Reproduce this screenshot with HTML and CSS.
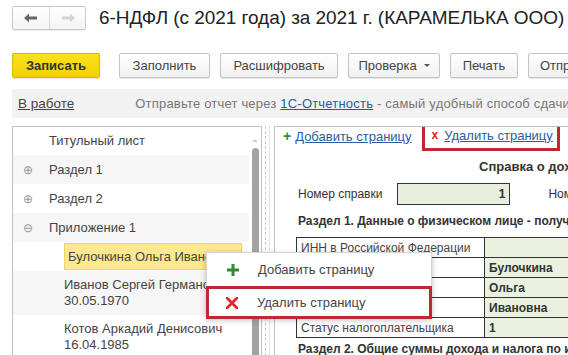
FILE: index.html
```html
<!DOCTYPE html>
<html lang="ru">
<head>
<meta charset="utf-8">
<link rel="stylesheet" href="styles.css">
</head>
<body>
<div class="page">
  <header class="header">
    <div class="nav">
      <span class="nav-btn"><svg width="14" height="10" viewBox="0 0 14 10"><path d="M0 5 L5 0.5 L5 3.5 L13 3.5 L13 6.5 L5 6.5 L5 9.5 Z" fill="#666"/></svg></span>
      <span class="nav-btn"><svg width="14" height="10" viewBox="0 0 14 10"><path d="M14 5 L9 0.5 L9 3.5 L1 3.5 L1 6.5 L9 6.5 L9 9.5 Z" fill="#d4d4d4"/></svg></span>
    </div>
    <h1 class="title">6-НДФЛ (с 2021 года) за 2021 г. (КАРАМЕЛЬКА ООО)</h1>
  </header>

  <div class="toolbar">
    <span class="btn btn-primary">Записать</span>
    <span class="btn btn-fill">Заполнить</span>
    <span class="btn w118">Расшифровать</span>
    <span class="btn w92">Проверка <span class="caret"></span></span>
    <span class="btn w68">Печать</span>
    <span class="btn">Отправить</span>
  </div>

  <div class="status">
    <a class="status-link">В работе</a>
    <span class="status-text">Отправьте отчет через <a class="blue-link">1С-Отчетность</a> - самый удобный способ сдачи отчетности</span>
  </div>

  <div class="main">
    <div class="tree-panel">
      <div class="tree">
        <div class="row"><span class="tog"></span>Титульный лист</div>
        <div class="row alt"><span class="tog">⊕</span>Раздел 1</div>
        <div class="row"><span class="tog">⊕</span>Раздел 2</div>
        <div class="row alt"><span class="tog">⊖</span>Приложение 1</div>
        <div class="row child"><span class="sel">Булочкина Ольга Ивановна</span></div>
        <div class="row child alt two">Иванов Сергей Германович<br>30.05.1970</div>
        <div class="row child two">Котов Аркадий Денисович<br>16.04.1985</div>
      </div>
      <div class="scroll">
        <span class="scroll-up"></span>
        <span class="thumb"></span>
      </div>
    </div>
    <div class="splitter"><span class="dash"></span><span class="line"></span></div>
    <div class="form-panel">
      <div class="links">
        <span class="plus-g">+</span><a class="blue-link">Добавить страницу</a>
        <span class="del-box"><span class="x-r">x</span><a class="blue-link">Удалить страницу</a></span>
      </div>
      <div class="form-title">Справка о доходах и суммах налога физического лица</div>
      <div class="num-row">
        <span class="lbl">Номер справки</span>
        <span class="num-input">1</span>
        <span class="lbl">Номер корректировки</span>
      </div>
      <div class="section">Раздел 1. Данные о физическом лице - получателе дохода</div>
      <table class="grid">
        <tr><td class="k">ИНН в Российской Федерации</td><td class="v"></td></tr>
        <tr><td class="k">Фамилия</td><td class="v">Булочкина</td></tr>
        <tr><td class="k">Имя</td><td class="v">Ольга</td></tr>
        <tr><td class="k">Отчество</td><td class="v">Ивановна</td></tr>
        <tr><td class="k">Статус налогоплательщика</td><td class="v">1</td></tr>
      </table>
      <div class="section s2">Раздел 2. Общие суммы дохода и налога по итогам налогового периода</div>
    </div>
  </div>

  <div class="menu">
    <div class="mi"><svg class="mi-icon" width="12" height="12" viewBox="0 0 12 12"><path d="M4.5 0h3v4.5H12v3H7.5V12h-3V7.5H0v-3h4.5z" fill="#2e8b3e"/></svg>Добавить страницу</div>
    <div class="mi mi-del"><svg class="mi-icon" width="12" height="12" viewBox="0 0 12 12"><path d="M1 1 L11 11 M11 1 L1 11" stroke="#e0212a" stroke-width="2.6" stroke-linecap="round"/></svg>Удалить страницу</div>
  </div>
</div>
</body>
</html>
```

FILE: styles.css
```css
* { box-sizing: border-box; }
html, body { margin: 0; padding: 0; }
body {
  width: 568px; height: 355px; overflow: hidden; background: #fff;
  font-family: "Liberation Sans", Arial, sans-serif; font-size: 13px; color: #333;
}
.page { position: relative; width: 568px; height: 355px; overflow: hidden; }

.header { display: flex; align-items: center; padding: 6px 0 0 12px; height: 30px; }
.nav { display: flex; height: 24px; border: 1px solid #c9c9c9; border-radius: 2px; box-shadow: 0 1px 1px rgba(0,0,0,0.08); }
.nav-btn { width: 36px; display: flex; align-items: center; justify-content: center; background: linear-gradient(#fff, #f4f4f4); }
.nav-btn + .nav-btn { border-left: 1px solid #dadada; }
.title { margin: 0 0 0 13px; font-size: 19px; font-weight: normal; color: #222; white-space: nowrap; letter-spacing: -0.05px; }

.toolbar { display: flex; gap: 10px; margin-top: 23px; padding-left: 12px; height: 25px; white-space: nowrap; }
.btn {
  flex-shrink: 0; display: flex; align-items: center; justify-content: center; padding: 0 11px; height: 25px;
  border: 1px solid #c4c4c4; border-radius: 2px; background: linear-gradient(#fff, #f1f1f1);
  box-shadow: 0 1px 1px rgba(0,0,0,0.1); color: #444; font-size: 13px;
}
.btn-primary { width: 88px; background: linear-gradient(#fbe21d, #f2d100); border-color: #d9b900; font-weight: bold; color: #333; }
.btn-fill { margin-left: 9px; width: 91px; }
.w118 { width: 118px; }
.w92 { width: 92px; }
.w68 { width: 68px; }
.caret { display: inline-block; margin-left: 7px; width: 0; height: 0; border-left: 3px solid transparent; border-right: 3px solid transparent; border-top: 3px solid #555; }

.status { display: flex; align-items: center; margin: 11px 0 0 12px; height: 29px; background: #f2f2f2; white-space: nowrap; }
.status-link { flex-shrink: 0; padding-left: 6px; text-decoration: underline; color: #444; font-size: 13.5px; }
.status-text { flex-shrink: 0; margin-left: 61px; color: #777; font-size: 13px; letter-spacing: 0.2px; }
.blue-link { color: #2b5b9e; text-decoration: underline; }

.main { display: flex; margin: 8px 0 0 12px; height: 240px; }
.tree-panel { flex-shrink: 0; display: flex; width: 250px; border: 1px solid #c2c2c2; border-bottom: none; }
.tree { flex: 1; margin-top: -1px; }
.row { display: flex; align-items: center; height: 29px; color: #444; white-space: nowrap; overflow: hidden; }
.row.alt { background: #f6f6f6; }
.tog { width: 36px; padding-left: 10px; color: #999; font-size: 12px; }
.child { padding-left: 51px; }
.two { display: block; height: 44px; padding-top: 6px; line-height: 16px; }
.sel { display: block; width: 178px; height: 27px; line-height: 25px; padding-left: 3px; background: #fbe88f; border: 1px solid #efd36a; overflow: hidden; white-space: nowrap; }
.scroll { position: relative; width: 12px; }
.scroll-up { display: block; margin: 12px auto 0; width: 0; height: 0; border-left: 3px solid transparent; border-right: 3px solid transparent; border-bottom: 3px solid #ccc; }
.thumb { display: block; margin: 6px auto 0; width: 7px; height: 220px; border-radius: 4px 4px 0 0; background: #a3a3a3; }

.splitter { flex-shrink: 0; display: flex; width: 12px; justify-content: flex-start; }
.dash { margin-left: 3px; width: 0; border-left: 1px dashed #c8c8c8; }
.line { margin-left: 3px; width: 0; border-left: 1px solid #e3e3e3; }

.form-panel { flex: 1; min-width: 0; border-left: 1px solid #c2c2c2; border-top: 1px solid #c2c2c2; padding-left: 8px; white-space: nowrap; overflow: hidden; font-size: 12px; }
.links { position: relative; display: flex; align-items: center; height: 22px; margin-top: -2px; font-size: 13px; }
.plus-g { color: #2e8b3e; font-weight: bold; font-size: 14px; margin-right: 4px; }
.del-box { flex-shrink: 0; display: flex; align-items: center; margin-left: 10px; height: 31px; margin-top: -2px; padding: 0 4px 0 7px; border: 3px solid #c0282f; }
.x-r { color: #e0212a; font-weight: bold; font-size: 12px; margin-right: 6px; }
.form-title { margin: 12px 0 0 196px; font-weight: bold; color: #333; font-size: 13px; }
.num-row { display: flex; align-items: center; margin-top: 9px; padding-left: 15px; height: 22px; }
.lbl { flex-shrink: 0; }
.num-input { flex-shrink: 0; margin-left: 15px; width: 113px; height: 22px; border: 1px solid #333; background: #e8eedc; text-align: right; padding-right: 4px; line-height: 20px; font-weight: bold; margin-right: 38px; }
.section { margin-top: 9px; padding-left: 15px; font-weight: bold; color: #333; }
.grid { margin: 9px 0 0 13px; border-collapse: collapse; table-layout: fixed; width: 400px; }
.grid td { height: 20px; border: 1px solid #333; padding: 0 4px; line-height: 18px; }
.grid .k { width: 188px; color: #444; }
.grid .v { width: 212px; background: #ebf1df; font-weight: bold; color: #333; }
.s2 { margin-top: 4px; }

.menu {
  position: absolute; left: 206px; top: 252px; width: 226px; height: 66px;
  background: #fff; border: 1px solid #d5d5d5; box-shadow: 0 2px 6px rgba(0,0,0,0.25);
}
.mi { display: flex; align-items: center; height: 33px; padding-left: 20px; color: #444; font-size: 13px; }
.mi-icon { margin-right: 19px; }
.mi-del { border: 3px solid #c0282f; padding-left: 17px; margin: 0 -1px -1px -1px; height: 33px; }
```
